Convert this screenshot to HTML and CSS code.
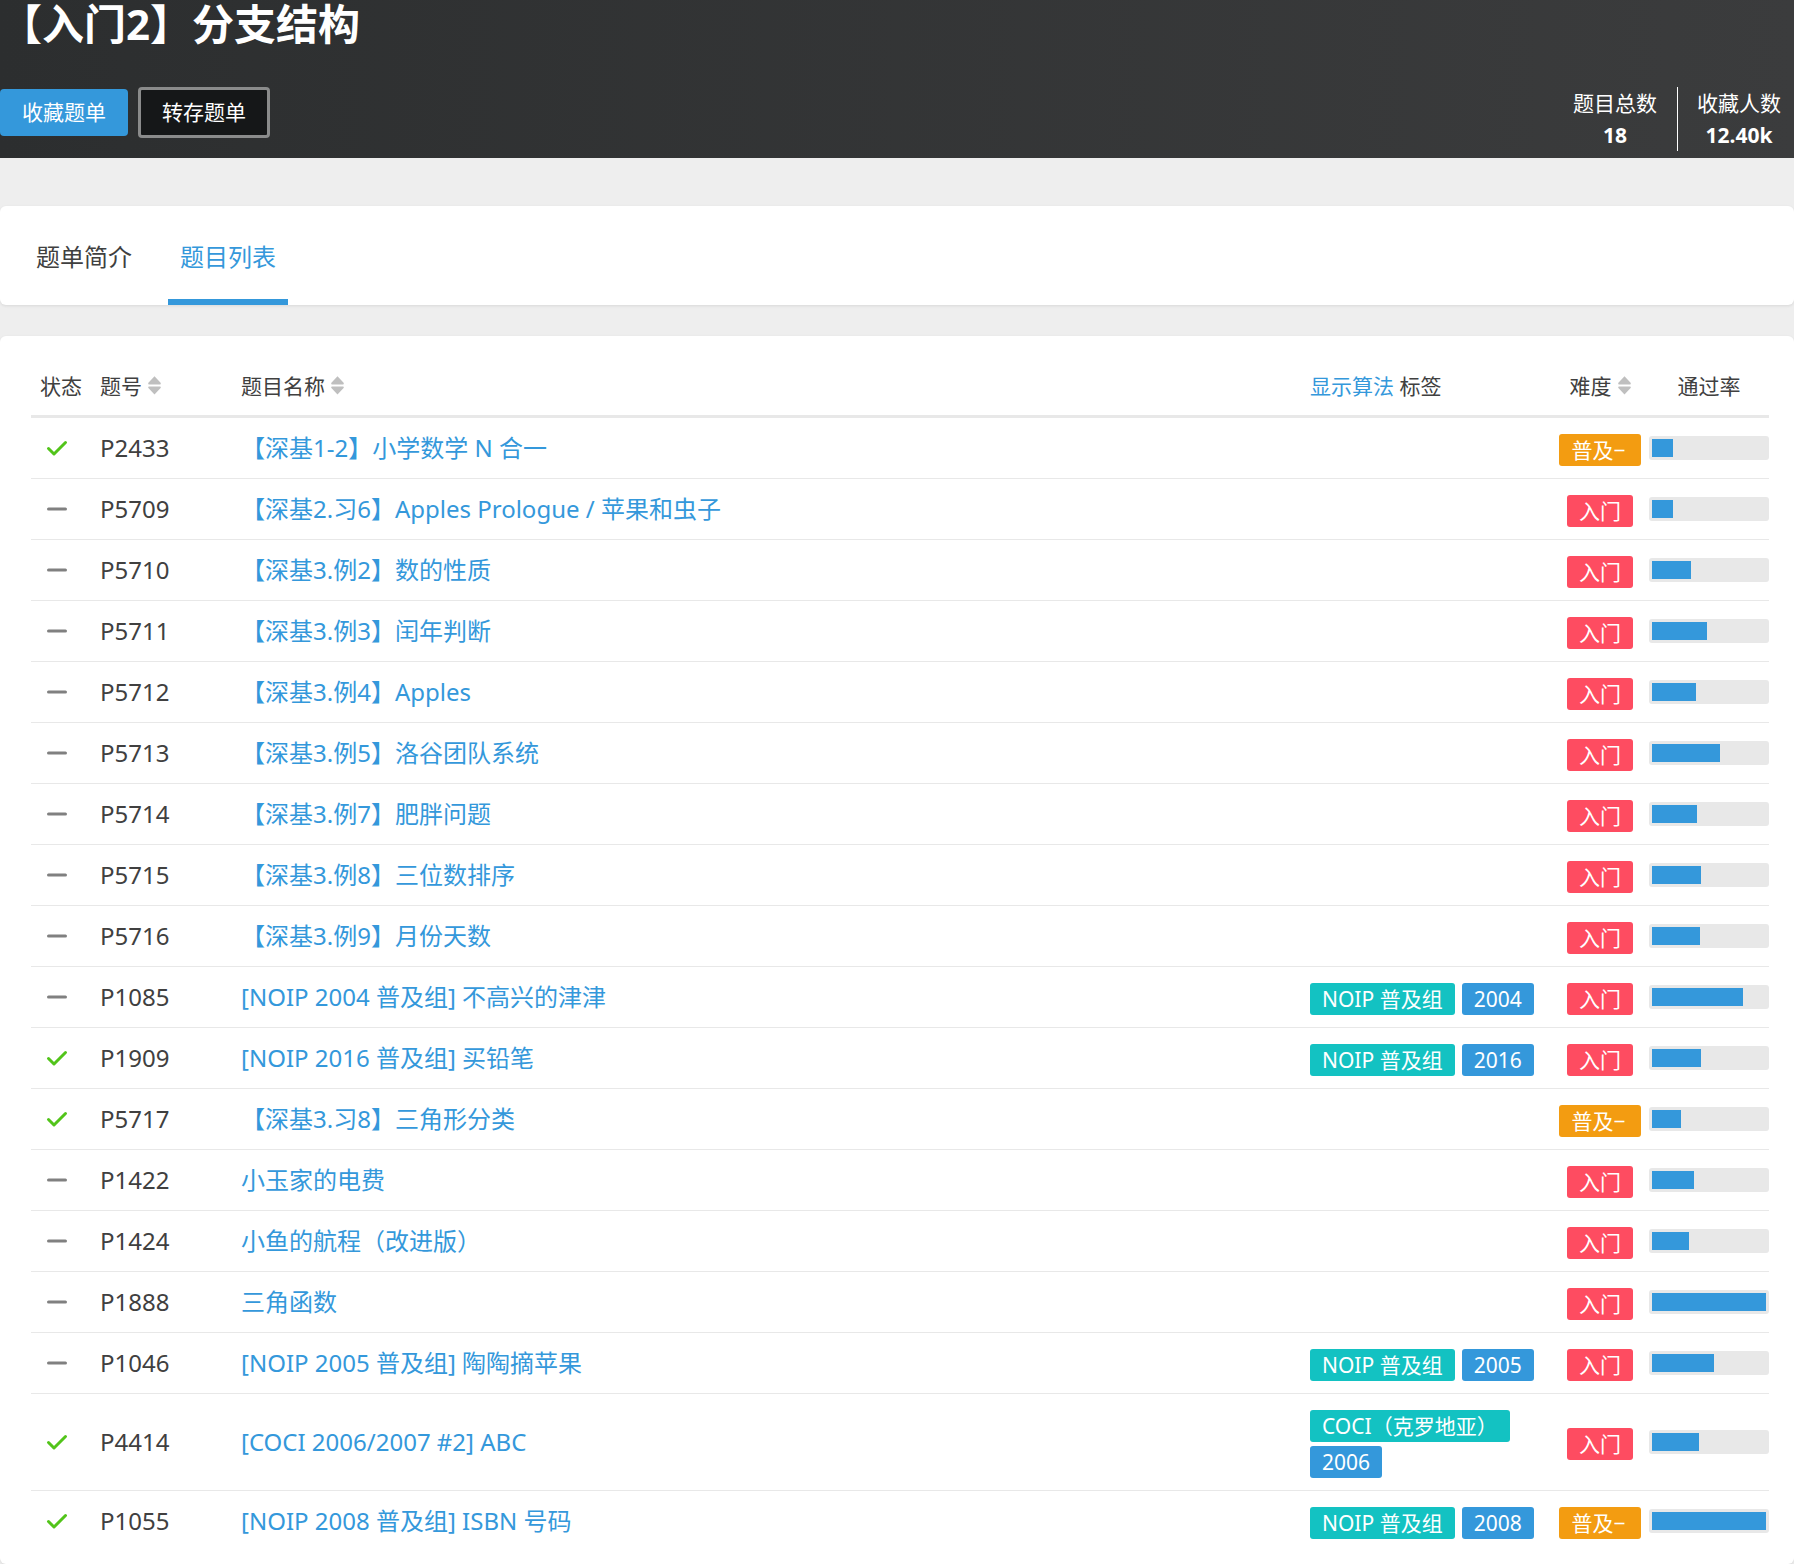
FILE: index.html
```html
<!DOCTYPE html>
<html lang="zh-CN">
<head>
<meta charset="utf-8">
<title>【入门2】分支结构</title>
<meta name="viewport" content="width=device-width, initial-scale=1">
<link rel="stylesheet" href="styles.css">
</head>
<body>
<svg class="sprite" aria-hidden="true">
  <symbol id="sort" viewBox="0 0 13 19"><path d="M6.5 0.3 12.6 6.8Q13.2 8.6 12 8.6H1Q-0.2 8.6 0.4 6.8Z M6.5 18.6 12.6 12.1Q13.2 10.4 12 10.4H1Q-0.2 10.4 0.4 12.1Z"/></symbol>
  <symbol id="check" viewBox="0 0 24 24"><path d="M3.5 12.5 9 18 20.5 6.5"/></symbol>
  <symbol id="minus" viewBox="0 0 24 24"><path d="M3.5 12H20.5"/></symbol>
</svg>
<header class="banner">
  <h1 class="title">【入门2】分支结构</h1>
  <div class="banner-row">
    <div class="actions">
      <button type="button" class="btn btn-primary">收藏题单</button>
      <button type="button" class="btn btn-outline">转存题单</button>
    </div>
    <dl class="stats">
      <div class="stat"><dt>题目总数</dt><dd>18</dd></div>
      <div class="stat"><dt>收藏人数</dt><dd>12.40k</dd></div>
    </dl>
  </div>
</header>
<main class="main">
  <nav class="card tabs">
    <a class="tab" href="#intro">题单简介</a>
    <a class="tab active" href="#problems" aria-current="page">题目列表</a>
  </nav>
  <section class="card list" id="problems">
    <table class="problems">
      <thead>
        <tr>
          <th class="c-status">状态</th>
          <th class="c-id"><span class="sortable">题号<svg class="sort"><use href="#sort"/></svg></span></th>
          <th class="c-name"><span class="sortable">题目名称<svg class="sort"><use href="#sort"/></svg></span></th>
          <th class="c-tags"><a href="#algorithms">显示算法</a> 标签</th>
          <th class="c-diff"><span class="sortable">难度<svg class="sort"><use href="#sort"/></svg></span></th>
          <th class="c-rate">通过率</th>
        </tr>
      </thead>
      <tbody>
        <tr><td class="c-status"><svg class="icon check"><use href="#check"/></svg></td><td class="c-id">P2433</td><td class="c-name"><a href="#P2433">【深基1-2】小学数学 N 合一</a></td><td class="c-tags"></td><td class="c-diff"><span class="tag orange">普及−</span></td><td class="c-rate"><div class="bar"><div class="fill" style="width:18.4%"></div></div></td></tr>
        <tr><td class="c-status"><svg class="icon minus"><use href="#minus"/></svg></td><td class="c-id">P5709</td><td class="c-name"><a href="#P5709">【深基2.习6】Apples Prologue / 苹果和虫子</a></td><td class="c-tags"></td><td class="c-diff"><span class="tag red">入门</span></td><td class="c-rate"><div class="bar"><div class="fill" style="width:18.4%"></div></div></td></tr>
        <tr><td class="c-status"><svg class="icon minus"><use href="#minus"/></svg></td><td class="c-id">P5710</td><td class="c-name"><a href="#P5710">【深基3.例2】数的性质</a></td><td class="c-tags"></td><td class="c-diff"><span class="tag red">入门</span></td><td class="c-rate"><div class="bar"><div class="fill" style="width:34.2%"></div></div></td></tr>
        <tr><td class="c-status"><svg class="icon minus"><use href="#minus"/></svg></td><td class="c-id">P5711</td><td class="c-name"><a href="#P5711">【深基3.例3】闰年判断</a></td><td class="c-tags"></td><td class="c-diff"><span class="tag red">入门</span></td><td class="c-rate"><div class="bar"><div class="fill" style="width:48.2%"></div></div></td></tr>
        <tr><td class="c-status"><svg class="icon minus"><use href="#minus"/></svg></td><td class="c-id">P5712</td><td class="c-name"><a href="#P5712">【深基3.例4】Apples</a></td><td class="c-tags"></td><td class="c-diff"><span class="tag red">入门</span></td><td class="c-rate"><div class="bar"><div class="fill" style="width:38.6%"></div></div></td></tr>
        <tr><td class="c-status"><svg class="icon minus"><use href="#minus"/></svg></td><td class="c-id">P5713</td><td class="c-name"><a href="#P5713">【深基3.例5】洛谷团队系统</a></td><td class="c-tags"></td><td class="c-diff"><span class="tag red">入门</span></td><td class="c-rate"><div class="bar"><div class="fill" style="width:59.6%"></div></div></td></tr>
        <tr><td class="c-status"><svg class="icon minus"><use href="#minus"/></svg></td><td class="c-id">P5714</td><td class="c-name"><a href="#P5714">【深基3.例7】肥胖问题</a></td><td class="c-tags"></td><td class="c-diff"><span class="tag red">入门</span></td><td class="c-rate"><div class="bar"><div class="fill" style="width:39.5%"></div></div></td></tr>
        <tr><td class="c-status"><svg class="icon minus"><use href="#minus"/></svg></td><td class="c-id">P5715</td><td class="c-name"><a href="#P5715">【深基3.例8】三位数排序</a></td><td class="c-tags"></td><td class="c-diff"><span class="tag red">入门</span></td><td class="c-rate"><div class="bar"><div class="fill" style="width:43%"></div></div></td></tr>
        <tr><td class="c-status"><svg class="icon minus"><use href="#minus"/></svg></td><td class="c-id">P5716</td><td class="c-name"><a href="#P5716">【深基3.例9】月份天数</a></td><td class="c-tags"></td><td class="c-diff"><span class="tag red">入门</span></td><td class="c-rate"><div class="bar"><div class="fill" style="width:42.1%"></div></div></td></tr>
        <tr><td class="c-status"><svg class="icon minus"><use href="#minus"/></svg></td><td class="c-id">P1085</td><td class="c-name"><a href="#P1085">[NOIP 2004 普及组] 不高兴的津津</a></td><td class="c-tags"><div class="tags"><span class="tag teal">NOIP 普及组</span><span class="tag blue">2004</span></div></td><td class="c-diff"><span class="tag red">入门</span></td><td class="c-rate"><div class="bar"><div class="fill" style="width:79.8%"></div></div></td></tr>
        <tr><td class="c-status"><svg class="icon check"><use href="#check"/></svg></td><td class="c-id">P1909</td><td class="c-name"><a href="#P1909">[NOIP 2016 普及组] 买铅笔</a></td><td class="c-tags"><div class="tags"><span class="tag teal">NOIP 普及组</span><span class="tag blue">2016</span></div></td><td class="c-diff"><span class="tag red">入门</span></td><td class="c-rate"><div class="bar"><div class="fill" style="width:43%"></div></div></td></tr>
        <tr><td class="c-status"><svg class="icon check"><use href="#check"/></svg></td><td class="c-id">P5717</td><td class="c-name"><a href="#P5717">【深基3.习8】三角形分类</a></td><td class="c-tags"></td><td class="c-diff"><span class="tag orange">普及−</span></td><td class="c-rate"><div class="bar"><div class="fill" style="width:25.4%"></div></div></td></tr>
        <tr><td class="c-status"><svg class="icon minus"><use href="#minus"/></svg></td><td class="c-id">P1422</td><td class="c-name"><a href="#P1422">小玉家的电费</a></td><td class="c-tags"></td><td class="c-diff"><span class="tag red">入门</span></td><td class="c-rate"><div class="bar"><div class="fill" style="width:36.8%"></div></div></td></tr>
        <tr><td class="c-status"><svg class="icon minus"><use href="#minus"/></svg></td><td class="c-id">P1424</td><td class="c-name"><a href="#P1424">小鱼的航程（改进版）</a></td><td class="c-tags"></td><td class="c-diff"><span class="tag red">入门</span></td><td class="c-rate"><div class="bar"><div class="fill" style="width:32.5%"></div></div></td></tr>
        <tr><td class="c-status"><svg class="icon minus"><use href="#minus"/></svg></td><td class="c-id">P1888</td><td class="c-name"><a href="#P1888">三角函数</a></td><td class="c-tags"></td><td class="c-diff"><span class="tag red">入门</span></td><td class="c-rate"><div class="bar"><div class="fill" style="width:100%"></div></div></td></tr>
        <tr><td class="c-status"><svg class="icon minus"><use href="#minus"/></svg></td><td class="c-id">P1046</td><td class="c-name"><a href="#P1046">[NOIP 2005 普及组] 陶陶摘苹果</a></td><td class="c-tags"><div class="tags"><span class="tag teal">NOIP 普及组</span><span class="tag blue">2005</span></div></td><td class="c-diff"><span class="tag red">入门</span></td><td class="c-rate"><div class="bar"><div class="fill" style="width:54.4%"></div></div></td></tr>
        <tr><td class="c-status"><svg class="icon check"><use href="#check"/></svg></td><td class="c-id">P4414</td><td class="c-name"><a href="#P4414">[COCI 2006/2007 #2] ABC</a></td><td class="c-tags"><div class="tags"><span class="tag teal">COCI（克罗地亚）</span><span class="tag blue">2006</span></div></td><td class="c-diff"><span class="tag red">入门</span></td><td class="c-rate"><div class="bar"><div class="fill" style="width:41.2%"></div></div></td></tr>
        <tr><td class="c-status"><svg class="icon check"><use href="#check"/></svg></td><td class="c-id">P1055</td><td class="c-name"><a href="#P1055">[NOIP 2008 普及组] ISBN 号码</a></td><td class="c-tags"><div class="tags"><span class="tag teal">NOIP 普及组</span><span class="tag blue">2008</span></div></td><td class="c-diff"><span class="tag orange">普及−</span></td><td class="c-rate"><div class="bar"><div class="fill" style="width:100%"></div></div></td></tr>
      </tbody>
    </table>
  </section>
</main>
</body>
</html>
```
FILE: styles.css
```css
* { box-sizing: border-box; }

body {
  margin: 0;
  background: #eee;
  color: #404040;
  font-family: "Noto Sans", "Noto Sans CJK SC", sans-serif;
  font-size: 24px;
  font-weight: 400;
}

a { color: #3498db; text-decoration: none; }

.sprite { display: none; }

/* Banner */
.banner {
  background: linear-gradient(90deg, #2c2e2f, #3b3c3d);
  color: #fff;
  padding-bottom: 7px;
}
.title {
  margin: 0;
  font-size: 42px;
  line-height: 48px;
  font-weight: 700;
}
.banner-row {
  display: flex;
  justify-content: space-between;
  align-items: flex-start;
  padding-top: 39px;
}
.actions { display: flex; align-items: center; gap: 10px; }
.btn {
  font: inherit;
  font-size: 21px;
  line-height: 31px;
  color: #fff;
  border: 0;
  border-radius: 4px;
  padding: 8px 22px;
}
.btn-primary { background: #3498db; }
.btn-outline {
  background: #151718;
  border: 3px solid #8a8b8b;
  padding: 7px 21px;
}
.stats {
  display: flex;
  margin: 0;
  padding-right: 13px;
  font-size: 21px;
  line-height: 32px;
  text-align: center;
}
.stat + .stat {
  margin-left: 20px;
  padding-left: 19px;
  border-left: 1px solid #fff;
}
.stat dd { margin: 0; font-weight: 700; }

/* Cards */
.main { display: flex; flex-direction: column; gap: 31px; padding-top: 48px; }
.card {
  background: #fff;
  border-radius: 6px;
  box-shadow: 0 1px 3px rgba(26, 26, 26, 0.1);
}

.tabs { display: flex; gap: 24px; padding: 0 24px; }
.tab {
  padding: 33px 12px 30px;
  line-height: 36px;
  color: #404040;
}
.tab.active {
  color: #3498db;
  padding-bottom: 24px;
  border-bottom: 6px solid #3498db;
}

/* Problem table */
.list { padding: 24px 25px 13px 31px; }
.problems {
  width: 100%;
  border-collapse: separate;
  border-spacing: 0;
  table-layout: fixed;
}
th {
  height: 58px;
  padding: 0 0 4px 9px;
  border-bottom: 3px solid #e8e8e8;
  font-size: 21px;
  font-weight: 400;
  line-height: 32px;
  text-align: left;
}
td {
  height: 61px;
  padding: 0 0 0 9px;
  border-bottom: 1px solid #e8e8e8;
  line-height: 36px;
}
tbody tr:last-child td { height: 60px; border-bottom: 0; }
.c-status { width: 60px; }
.c-id { width: 140px; }
.c-name { padding-left: 10px; }
.c-tags { width: 250px; }
.c-diff { width: 98px; padding-left: 0; text-align: center; }
.c-rate { width: 120px; padding-left: 0; text-align: center; }
td.c-status { padding-left: 14px; }
td.c-tags, td.c-diff { padding-top: 16px; padding-bottom: 12px; line-height: 32px; }

.sortable { display: inline-flex; align-items: center; gap: 6px; }
.sort { width: 13px; height: 19px; fill: #bfbfbf; }

.icon {
  display: block;
  width: 24px;
  height: 24px;
  fill: none;
  stroke-width: 3;
  stroke-linecap: round;
  stroke-linejoin: round;
}
.check { stroke: #52c41a; }
.minus { stroke: #808080; }

.tags { display: flex; flex-wrap: wrap; gap: 4px 7px; }
.tag {
  display: inline-block;
  vertical-align: top;
  padding: 0 12px;
  border-radius: 3px;
  color: #fff;
  font-size: 21px;
  line-height: 32px;
}
.orange { padding-right: 15px; background: #f39c11; }
.red { background: #fe4c61; }
.teal { background: #13c2c2; }
.blue { background: #3498db; }

.bar {
  height: 24px;
  padding: 3px;
  border-radius: 3px;
  background: #e8e8e8;
}
.fill { height: 18px; background: #3498db; }
```
